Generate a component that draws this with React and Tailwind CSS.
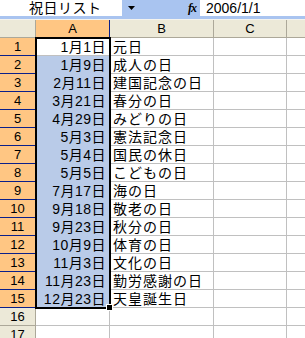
import React from 'react';

const holidays = [
  ['1月1日', '元日'],
  ['1月9日', '成人の日'],
  ['2月11日', '建国記念の日'],
  ['3月21日', '春分の日'],
  ['4月29日', 'みどりの日'],
  ['5月3日', '憲法記念日'],
  ['5月4日', '国民の休日'],
  ['5月5日', 'こどもの日'],
  ['7月17日', '海の日'],
  ['9月18日', '敬老の日'],
  ['9月23日', '秋分の日'],
  ['10月9日', '体育の日'],
  ['11月3日', '文化の日'],
  ['11月23日', '勤労感謝の日'],
  ['12月23日', '天皇誕生日'],
];

const font = { fontFamily: "'Liberation Sans', 'Noto Sans CJK JP', sans-serif" };

export default function App() {
  return (
    <div className="relative w-[305px] h-[338px] overflow-hidden bg-white text-[13px] text-black leading-none" style={font}>
      {/* Formula bar */}
      <div className="flex h-[20px] bg-[#a9c4f0] border-b border-[#f4f3ee]">
        <div className="shrink-0 w-[122px] h-[16px] bg-white pl-[29px] pt-[1px] text-[14px] tracking-[0.5px] leading-[15px]">
          祝日リスト
        </div>
        <div className="shrink-0 w-[78px] h-[16px] flex items-center">
          <svg width="8" height="4" className="ml-[6px]" viewBox="0 0 8 4">
            <polygon points="0,0 7,0 3.5,4" fill="#000" />
          </svg>
          <span className="ml-auto mr-[4px] italic font-bold text-[12px] tracking-[-1px]" style={{ fontFamily: "'Liberation Serif', serif" }}>
            fx
          </span>
        </div>
        <div className="flex-1 h-[16px] bg-white pl-[6px] pt-[1px] text-[14px] leading-[15px]">2006/1/1</div>
      </div>

      {/* Column headers */}
      <div className="flex h-[18px] bg-[#ece9d8]">
        <div className="w-[36px] border-r border-b border-[#aca899]" />
        <div className="w-[74px] bg-[#ffc683] border-r border-b border-r-[#0a1f8a] border-b-[#0a1f8a] flex items-center justify-center">A</div>
        <div className="w-[104px] border-r border-b border-[#aca899] flex items-center justify-center">B</div>
        <div className="w-[73px] border-r border-b border-[#aca899] flex items-center justify-center">C</div>
        <div className="flex-1 border-b border-[#aca899]" />
      </div>

      {/* Rows */}
      {holidays.map(([date, name], i) => (
        <div key={i} className="flex h-[18px]">
          <div className="w-[36px] bg-[#ffc683] border-r border-b border-[#0a1f8a] flex items-center justify-center">
            {i + 1}
          </div>
          <div className={`w-[74px] border-r border-b border-[#c0c0c0] flex items-center justify-end pr-[3px] text-[14px] tracking-[0.5px] ${i === 0 ? 'bg-white' : 'bg-[#b9cbe8] border-b-[#b9cbe8]'}`}>
            {date}
          </div>
          <div className="w-[104px] border-r border-b border-[#c0c0c0] flex items-center pl-[3px] text-[14px] tracking-[1px]">
            {name}
          </div>
          <div className="w-[73px] border-r border-b border-[#c0c0c0]" />
          <div className="flex-1 border-b border-[#c0c0c0]" />
        </div>
      ))}
      {[16, 17].map((n) => (
        <div key={n} className="flex h-[18px]">
          <div className="w-[36px] bg-[#ece9d8] border-r border-b border-[#aca899] flex items-center justify-center">{n}</div>
          <div className="w-[74px] border-r border-b border-[#c0c0c0]" />
          <div className="w-[104px] border-r border-b border-[#c0c0c0]" />
          <div className="w-[73px] border-r border-b border-[#c0c0c0]" />
          <div className="flex-1 border-b border-[#c0c0c0]" />
        </div>
      ))}

      {/* Selection outline and fill handle */}
      <div className="absolute left-[35px] top-[37px] w-[76px] h-[272px] border-2 border-black pointer-events-none" />
      <div className="absolute left-[106px] top-[304px] w-[7px] h-[7px] bg-black border border-white pointer-events-none" />
    </div>
  );
}
